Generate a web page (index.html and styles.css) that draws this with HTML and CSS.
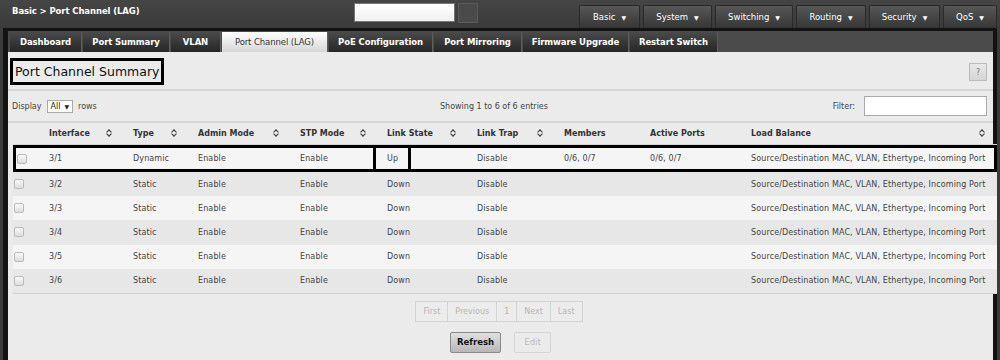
FILE: index.html
```html
<!DOCTYPE html>
<html>
<head>
<meta charset="utf-8">
<link rel="stylesheet" href="styles.css">
</head>
<body>
<div class="topbar">
  <div class="crumb">Basic &gt; Port Channel (LAG)</div>
  <div class="search"><input class="search-box" type="text"><span class="search-btn"></span></div>
  <nav class="menu">
    <span class="mbtn w-basic">Basic <i>▼</i></span>
    <span class="mbtn w-system">System <i>▼</i></span>
    <span class="mbtn w-switching">Switching <i>▼</i></span>
    <span class="mbtn w-routing">Routing <i>▼</i></span>
    <span class="mbtn w-security">Security <i>▼</i></span>
    <span class="mbtn w-qos">QoS <i>▼</i></span>
  </nav>
</div>
<div class="frame">
  <div class="tabs">
    <span class="tab t1">Dashboard</span>
    <span class="tab t2">Port Summary</span>
    <span class="tab t3">VLAN</span>
    <span class="tab active t4">Port Channel (LAG)</span>
    <span class="tab t5">PoE Configuration</span>
    <span class="tab t6">Port Mirroring</span>
    <span class="tab t7">Firmware Upgrade</span>
    <span class="tab t8">Restart Switch</span>
  </div>
  <div class="content">
    <div class="title-row">
      <h1 class="title">Port Channel Summary</h1>
      <span class="help">?</span>
    </div>
    <div class="controls">
      <div class="display">Display <span class="select">All <i>▼</i></span> rows</div>
      <div class="showing">Showing 1 to 6 of 6 entries</div>
      <div class="filter"><span class="filter-label">Filter:</span> <input class="filter-box" type="text"></div>
    </div>
    <table class="grid">
      <colgroup>
        <col class="c0"><col class="c1"><col class="c2"><col class="c3"><col class="c4"><col class="c5"><col class="c6"><col class="c7"><col class="c8"><col class="c9">
      </colgroup>
      <thead>
        <tr>
          <th></th>
          <th><div class="th">Interface<span class="sort"></span></div></th>
          <th><div class="th">Type<span class="sort"></span></div></th>
          <th><div class="th">Admin Mode<span class="sort"></span></div></th>
          <th><div class="th">STP Mode<span class="sort"></span></div></th>
          <th><div class="th">Link State<span class="sort"></span></div></th>
          <th><div class="th">Link Trap<span class="sort"></span></div></th>
          <th><div class="th">Members</div></th>
          <th><div class="th">Active Ports</div></th>
          <th><div class="th last">Load Balance<span class="sort"></span></div></th>
        </tr>
      </thead>
      <tbody>
        <tr class="hl odd">
          <td><span class="cb"></span></td><td>3/1</td><td>Dynamic</td><td>Enable</td><td>Enable</td><td><span class="mark">Up</span></td><td>Disable</td><td>0/6, 0/7</td><td>0/6, 0/7</td><td>Source/Destination MAC, VLAN, Ethertype, Incoming Port</td>
        </tr>
        <tr class="even">
          <td><span class="cb"></span></td><td>3/2</td><td>Static</td><td>Enable</td><td>Enable</td><td>Down</td><td>Disable</td><td></td><td></td><td>Source/Destination MAC, VLAN, Ethertype, Incoming Port</td>
        </tr>
        <tr class="odd">
          <td><span class="cb"></span></td><td>3/3</td><td>Static</td><td>Enable</td><td>Enable</td><td>Down</td><td>Disable</td><td></td><td></td><td>Source/Destination MAC, VLAN, Ethertype, Incoming Port</td>
        </tr>
        <tr class="even">
          <td><span class="cb"></span></td><td>3/4</td><td>Static</td><td>Enable</td><td>Enable</td><td>Down</td><td>Disable</td><td></td><td></td><td>Source/Destination MAC, VLAN, Ethertype, Incoming Port</td>
        </tr>
        <tr class="odd">
          <td><span class="cb"></span></td><td>3/5</td><td>Static</td><td>Enable</td><td>Enable</td><td>Down</td><td>Disable</td><td></td><td></td><td>Source/Destination MAC, VLAN, Ethertype, Incoming Port</td>
        </tr>
        <tr class="even">
          <td><span class="cb"></span></td><td>3/6</td><td>Static</td><td>Enable</td><td>Enable</td><td>Down</td><td>Disable</td><td></td><td></td><td>Source/Destination MAC, VLAN, Ethertype, Incoming Port</td>
        </tr>
      </tbody>
    </table>
    <div class="pager">
      <span class="pg">First</span><span class="pg">Previous</span><span class="pg">1</span><span class="pg">Next</span><span class="pg">Last</span>
    </div>
    <div class="actions">
      <span class="btn primary">Refresh</span>
      <span class="btn disabled">Edit</span>
    </div>
  </div>
</div>
</body>
</html>
```
FILE: styles.css
```css
* { box-sizing: border-box; }
*::before, *::after { box-sizing: border-box; }
html, body { margin: 0; padding: 0; }
body {
  width: 1000px;
  height: 360px;
  overflow: hidden;
  background: #3b3b3b;
  font-family: "DejaVu Sans", Verdana, sans-serif;
  font-size: 8px;
  color: #333;
}

/* top bar */
.topbar {
  height: 28px;
  display: flex;
  align-items: flex-start;
  background: linear-gradient(#454545, #3a3a3a);
}
.crumb {
  color: #fff;
  font-weight: bold;
  font-size: 8.5px;
  padding: 6px 0 0 12px;
  width: 354px;
  letter-spacing: -0.1px;
}
.search { display: flex; gap: 3px; margin-top: 3px; }
.search-box {
  width: 101px; height: 19px;
  margin: 0; padding: 0;
  border: 1px solid #777;
  background: linear-gradient(#fff, #f0f0f0);
}
.search-btn {
  width: 20px; height: 20px;
  border: 1px solid #5a5a5a;
  background: #4a4a4a;
}
.menu {
  margin-left: auto;
  display: flex;
  gap: 3px;
  padding-top: 5px;
  margin-right: 3px;
}
.mbtn {
  height: 23px;
  display: flex;
  align-items: center;
  justify-content: center;
  gap: 6px;
  color: #fff;
  font-size: 8.5px;
  background: linear-gradient(#575757, #363636);
  border: 1px solid #2a2a2a;
  border-bottom: none;
  border-radius: 2px 2px 0 0;
}
.mbtn i { font-style: normal; font-size: 6px; }
.w-basic { width: 61px; }
.w-system { width: 69px; }
.w-switching { width: 78px; }
.w-routing { width: 70px; }
.w-security { width: 71px; }
.w-qos { width: 54px; }

/* frame */
.frame {
  margin: 0 3px 0 3px;
  border-left: 5px solid #121212;
  border-right: 4px solid #121212;
  border-top: 3px solid #121212;
  background: #4a4a4a;
  height: 332px;
}
.tabs {
  display: flex;
  gap: 1px;
  padding: 1px 0 0 2px;
  height: 21px;
  background: #4b4b4b;
}
.tab {
  height: 20px;
  display: flex;
  align-items: center;
  justify-content: center;
  color: #fff;
  font-weight: bold;
  font-size: 8.5px;
  letter-spacing: -0.1px;
  background: linear-gradient(#4a4a4a, #262626);
  border-right: 1px solid #5d5d5d;
}
.tab.active {
  background: linear-gradient(#ffffff, #d6d6d6);
  color: #333;
  font-weight: normal;
}
.t1 { width: 72px; }
.t2 { width: 87px; }
.t3 { width: 50px; }
.t4 { width: 106px; }
.t5 { width: 104px; }
.t6 { width: 88px; }
.t7 { width: 106px; }
.t8 { width: 88px; }

.content {
  background: #ebebeb;
  height: 310px;
}
.title-row {
  display: flex;
  align-items: flex-start;
  justify-content: space-between;
  padding: 6px 6px 0 2px;
  height: 39px;
  border-bottom: 2px solid #d4d4d4;
}
.title {
  margin: 0;
  font-weight: normal;
  font-size: 12.5px;
  color: #111;
  border: 3px solid #000;
  height: 27px;
  line-height: 21px;
  padding: 0 2px 0 2px;
  white-space: nowrap;
}
.help {
  margin-top: 5px;
  width: 18px; height: 18px;
  border: 1px solid #bbb;
  background: linear-gradient(#e8e8e8, #d6d6d6);
  color: #777;
  font-size: 8px;
  display: flex; align-items: center; justify-content: center;
}
.controls {
  display: flex;
  align-items: center;
  height: 32px;
  padding: 0 6px 0 4px;
  border-bottom: 2px solid #d4d4d4;
  color: #444;
}
.display { width: 400px; display: flex; align-items: center; gap: 5px; }
.select {
  display: inline-flex; align-items: center; gap: 4px;
  height: 13px; padding: 0 3px;
  border: 1px solid #aaa;
  background: #fff;
  color: #222;
}
.select i { font-style: normal; font-size: 6px; }
.showing { flex: 1; text-align: left; padding-left: 28px; }
.filter { display: flex; align-items: center; gap: 9px; }
.filter-label { color: #444; }
.filter-box {
  width: 123px; height: 20px; margin: 0;
  border: 1px solid #aaa;
  background: #fff;
}

/* table */
.grid {
  border-collapse: separate;
  border-spacing: 0;
  margin-left: 5px;
  width: 984px;
  table-layout: fixed;
  border-bottom: 1px solid #d0d0d0;
}
.c0 { width: 32px; }
.c1 { width: 84px; }
.c2 { width: 65px; }
.c3 { width: 102px; }
.c4 { width: 87px; }
.c5 { width: 90px; }
.c6 { width: 87px; }
.c7 { width: 86px; }
.c8 { width: 101px; }
.c9 { width: 250px; }
.grid th {
  height: 22px;
  text-align: left;
  font-weight: bold;
  color: #333;
  padding: 0 0 0 4px;
  border-bottom: 1px solid #d4d4d4;
}
.th {
  display: flex;
  align-items: center;
  justify-content: space-between;
  padding-right: 17px;
}
.th.last { padding-right: 12px; }
.sort {
  width: 6px; height: 9px;
  position: relative;
}
.sort::before, .sort::after {
  content: "";
  position: absolute;
  left: 0;
  width: 4px; height: 4px;
  border-left: 1.5px solid #333;
  border-top: 1.5px solid #333;
  transform: rotate(45deg);
  margin-left: 1px;
}
.sort::before { top: 1px; }
.sort::after { top: 3px; transform: rotate(225deg); }
.grid td {
  height: 24.2px;
  padding: 0 0 0 4px;
  color: #444;
  white-space: nowrap;
  letter-spacing: 0.12px;
}
.grid tr.odd td { background: #f5f5f5; }
.grid tr.even td { background: #e7e7e7; }
.grid tr.hl td {
  height: 27px;
  border-top: 3px solid #000;
  border-bottom: 3px solid #000;
}
.grid tr.hl td:first-child { border-left: 3px solid #000; }
.grid tr.hl td:last-child { border-right: 3px solid #000; }
.cb {
  display: inline-block;
  width: 10px; height: 10px;
  border: 1px solid #bbb;
  border-radius: 2px;
  background: linear-gradient(#fafafa, #dcdcdc);
  vertical-align: middle;
  margin-left: -3px;
}
.mark { position: relative; }
.mark::after {
  content: "";
  position: absolute;
  left: -14px;
  top: -9px;
  width: 38px;
  height: 25px;
  border-left: 3px solid #000;
  border-right: 3px solid #000;
}

.pager {
  display: flex;
  justify-content: center;
  margin-top: 7px;
  margin-left: -2px;
}
.pg {
  height: 21px;
  padding: 0 7px;
  display: flex; align-items: center;
  border: 1px solid #d3d3d3;
  margin-left: -1px;
  color: #b5b5b5;
  background: #ececec;
}
.actions {
  display: flex;
  justify-content: center;
  gap: 13px;
  margin-top: 10px;
}
.btn {
  height: 21px;
  display: flex; align-items: center; justify-content: center;
  border-radius: 2px;
  font-size: 8.5px;
}
.btn.primary {
  width: 51px;
  border: 1px solid #8a8a8a;
  background: linear-gradient(#e0e0e0, #b8b8b8);
  color: #111;
  font-weight: bold;
}
.btn.disabled {
  width: 37px;
  border: 1px solid #d6d6d6;
  color: #bbb;
}
```
